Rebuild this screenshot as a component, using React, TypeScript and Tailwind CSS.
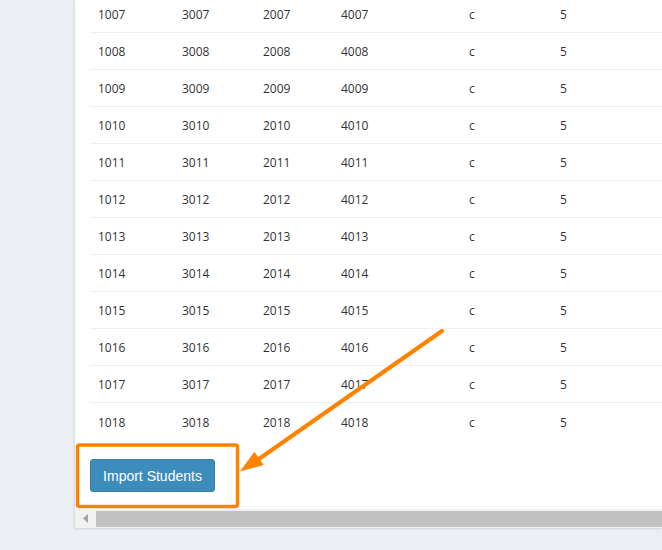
import React from "react";

const rows = Array.from({ length: 12 }, (_, i) => {
  const n = 7 + i;
  const s = n.toString().padStart(2, "0");
  return [`10${s}`, `30${s}`, `20${s}`, `40${s}`, "c", "5"];
});

const widths = ["w-[84px]", "w-[81px]", "w-[78px]", "w-[128px]", "w-[91px]", "w-[100px]"];

export default function App() {
  return (
    <div
      className="relative w-[662px] h-[550px] overflow-hidden bg-[#ecf0f5] flex"
      style={{ fontFamily: '"Open Sans", "Liberation Sans", Arial, sans-serif' }}
    >
      <div className="w-[74px] shrink-0" />
      <div className="flex-1 h-[528px] bg-white border-l border-[#dde1e6] shadow-[0_1px_2px_rgba(0,0,0,0.12)] flex flex-col overflow-hidden">
        <div className="flex-1 pl-[15px] flex flex-col">
          <div className="mt-[-4px] flex flex-col">
            {rows.map((r, i) => (
              <div
                key={i}
                className={`flex h-[37px] items-center pt-[2px] text-[12px] text-[#333] ${i < rows.length - 1 ? "border-b border-[#f0f0f0]" : ""}`}
              >
                {r.map((c, j) => (
                  <div key={j} className={`${widths[j]} shrink-0 pl-[8px]`}>
                    {c}
                  </div>
                ))}
              </div>
            ))}
          </div>
          <div className="mt-[19px]">
            <button
              className="w-[125px] h-[33px] pt-[2px] rounded-[3px] bg-[#3c8dbc] border border-[#367fa9] text-white text-[14px] flex items-center justify-center"
              style={{ fontFamily: '"Liberation Sans", Arial, sans-serif' }}
            >
              Import Students
            </button>
          </div>
        </div>
        <div className="h-[19px] bg-[#f1f1f1] flex items-center shrink-0">
          <div className="w-[21px] h-full flex items-center justify-center">
            <svg width="6" height="9" viewBox="0 0 6 9">
              <polygon points="5,0 5,9 0,4.5" fill="#a3a3a3" />
            </svg>
          </div>
          <div className="flex-1 h-[16px] bg-[#c1c1c1]" />
        </div>
      </div>
      <svg className="absolute left-0 top-0 pointer-events-none" width="662" height="550">
        <rect x="77.5" y="445" width="160" height="61.5" rx="2" fill="none" stroke="#ff8200" strokeWidth="3.5" />
        <line x1="442" y1="331" x2="256" y2="461" stroke="#ff8200" strokeWidth="4" strokeLinecap="round" />
        <polygon points="240,471.5 254.4,451.8 263.6,465" fill="#ff8200" />
      </svg>
    </div>
  );
}
